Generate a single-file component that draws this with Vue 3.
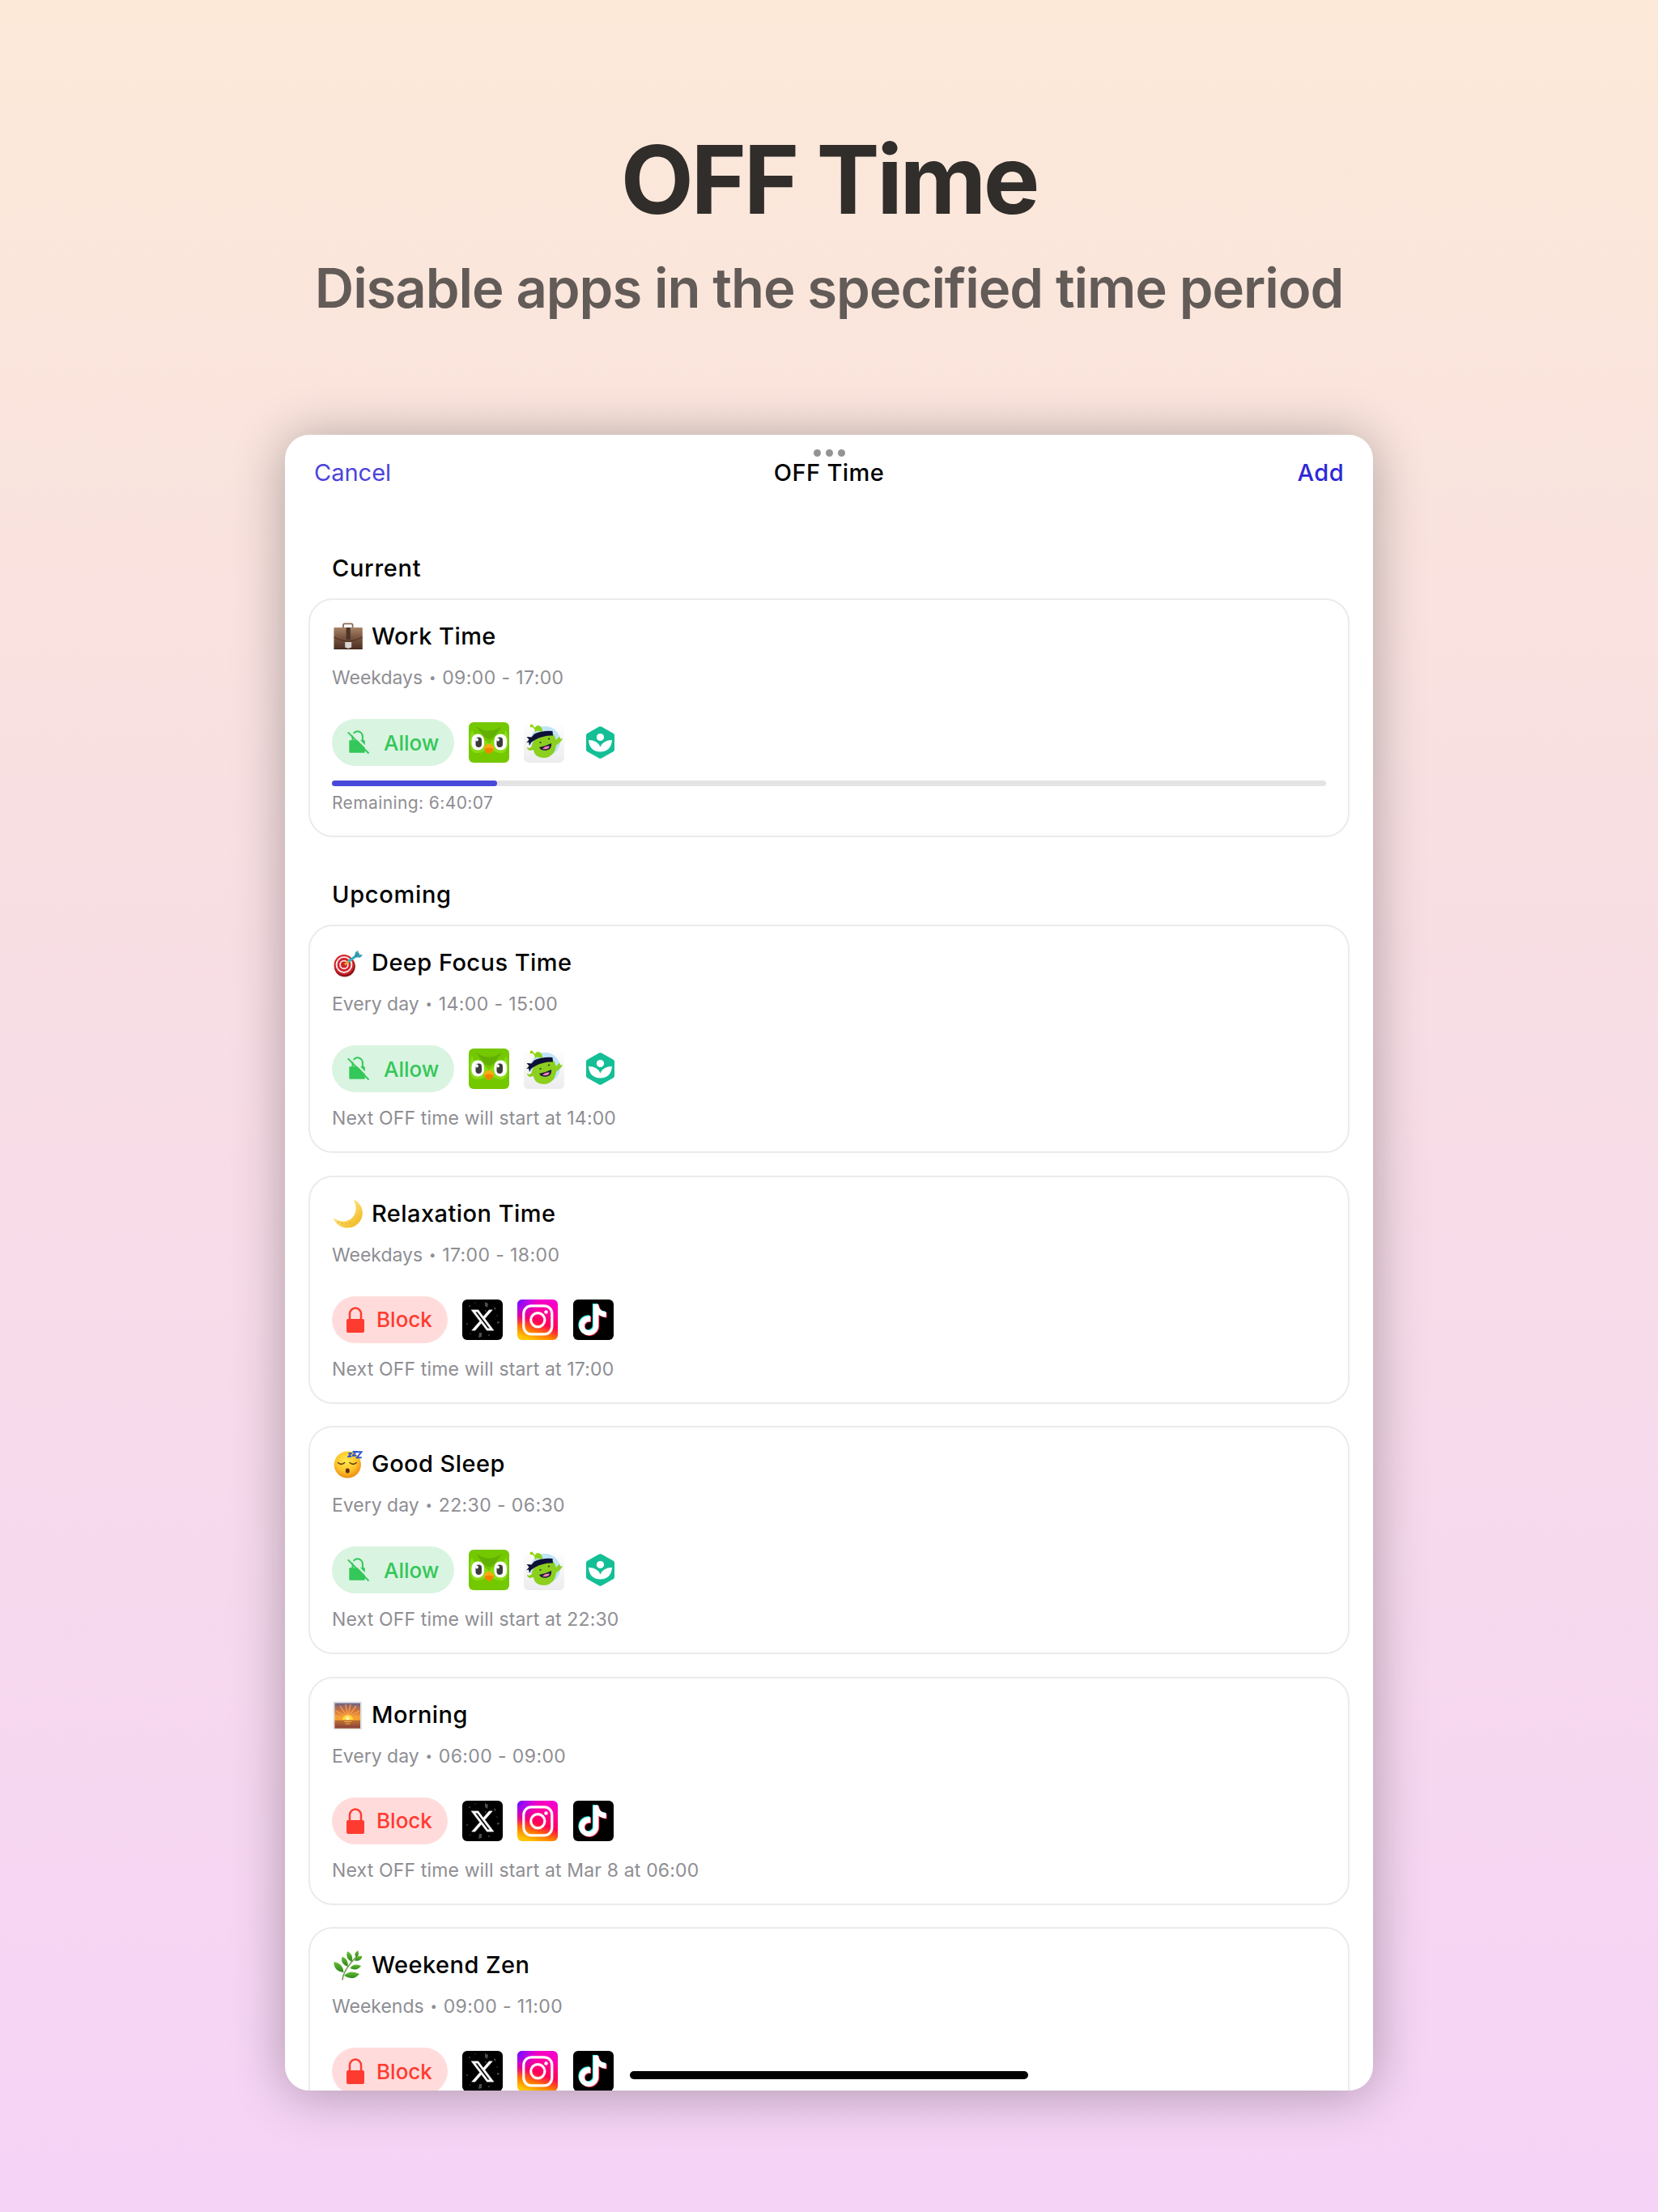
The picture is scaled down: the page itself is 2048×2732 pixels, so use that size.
<script setup>
import { ref } from 'vue'

const allowedApps = ['owl', 'dojo', 'khan']
const blockedApps = ['x', 'instagram', 'tiktok']

const sections = ref([
  {
    name: 'Current',
    items: [
      {
        id: 1,
        emoji: 'briefcase',
        title: 'Work Time',
        days: 'Weekdays',
        hours: '09:00 - 17:00',
        mode: 'allow',
        apps: allowedApps,
        progress: 16.6,
        note: 'Remaining: 6:40:07'
      }
    ]
  },
  {
    name: 'Upcoming',
    items: [
      {
        id: 2,
        emoji: 'target',
        title: 'Deep Focus Time',
        days: 'Every day',
        hours: '14:00 - 15:00',
        mode: 'allow',
        apps: allowedApps,
        note: 'Next OFF time will start at 14:00'
      },
      {
        id: 3,
        emoji: 'moon',
        title: 'Relaxation Time',
        days: 'Weekdays',
        hours: '17:00 - 18:00',
        mode: 'block',
        apps: blockedApps,
        note: 'Next OFF time will start at 17:00'
      },
      {
        id: 4,
        emoji: 'sleep',
        title: 'Good Sleep',
        days: 'Every day',
        hours: '22:30 - 06:30',
        mode: 'allow',
        apps: allowedApps,
        note: 'Next OFF time will start at 22:30'
      },
      {
        id: 5,
        emoji: 'sunrise',
        title: 'Morning',
        days: 'Every day',
        hours: '06:00 - 09:00',
        mode: 'block',
        apps: blockedApps,
        note: 'Next OFF time will start at Mar 8 at 06:00'
      },
      {
        id: 6,
        emoji: 'herb',
        title: 'Weekend Zen',
        days: 'Weekends',
        hours: '09:00 - 11:00',
        mode: 'block',
        apps: blockedApps,
        note: ''
      }
    ]
  }
])
</script>

<template>
  <div class="page">
    <!-- Shared icons -->
    <svg class="sprite" width="0" height="0" aria-hidden="true">
      <defs>
        <linearGradient id="g-case" x1="0" y1="0" x2="0" y2="1">
          <stop offset="0" stop-color="#a98467" />
          <stop offset="0.45" stop-color="#795641" />
          <stop offset="1" stop-color="#4d3023" />
        </linearGradient>
        <linearGradient id="g-moon" x1="0" y1="0" x2="1" y2="1">
          <stop offset="0.3" stop-color="#ffe680" />
          <stop offset="1" stop-color="#eeb010" />
        </linearGradient>
        <radialGradient id="g-face" cx="0.45" cy="0.35" r="0.65">
          <stop offset="0" stop-color="#ffe94f" />
          <stop offset="0.6" stop-color="#fdc52b" />
          <stop offset="1" stop-color="#ee8b14" />
        </radialGradient>
        <linearGradient id="g-sky" x1="0" y1="0" x2="0" y2="1">
          <stop offset="0" stop-color="#6a6288" />
          <stop offset="0.3" stop-color="#d0733f" />
          <stop offset="0.62" stop-color="#fba52c" />
        </linearGradient>
        <linearGradient id="g-sea" x1="0" y1="0" x2="0" y2="1">
          <stop offset="0" stop-color="#c27331" />
          <stop offset="1" stop-color="#863f3d" />
        </linearGradient>
        <linearGradient id="g-leaf" x1="0" y1="0" x2="0" y2="1">
          <stop offset="0" stop-color="#68bd34" />
          <stop offset="1" stop-color="#2c871c" />
        </linearGradient>
        <linearGradient id="g-dojo" x1="0" y1="0" x2="0" y2="1">
          <stop offset="0" stop-color="#ffffff" />
          <stop offset="1" stop-color="#ececee" />
        </linearGradient>
        <linearGradient id="g-insta" x1="0.35" y1="1" x2="0.7" y2="0">
          <stop offset="0" stop-color="#ffc400" />
          <stop offset="0.2" stop-color="#ff7a00" />
          <stop offset="0.45" stop-color="#ff0058" />
          <stop offset="0.8" stop-color="#ff00a8" />
          <stop offset="1" stop-color="#f400d0" />
        </linearGradient>
        <radialGradient id="g-violet" cx="0" cy="0" r="0.62">
          <stop offset="0" stop-color="#5a12ff" />
          <stop offset="0.35" stop-color="#9a08ff" stop-opacity="0.85" />
          <stop offset="1" stop-color="#e000e8" stop-opacity="0" />
        </radialGradient>
      </defs>

      <symbol id="briefcase" viewBox="0 0 38 38">
        <path d="M13 8V5q0-1.600 1.600-1.600h8.400q1.600 0 1.600 1.600V8" fill="none" stroke="#8a6a52" stroke-width="1.800" />
        <path d="M2.400 8h33.400q1 0 1 1v24.500q0 1.500-1.500 1.500H2.900q-1.500 0-1.500-1.500V9q0-1 1-1z" fill="url(#g-case)" />
        <path d="M1.500 20q9 5 17.600 5t17.600-5" fill="none" stroke="#4b2f22" stroke-width="1" />
        <path d="M16.600 8h5.200v15h-5.200z" fill="#4c3528" />
        <path d="M15.200 26h8v6.500l-4 1.500-4-1.500z" fill="#d9d5d2" />
        <path d="M1.500 34.500h35.200" stroke="#3a231a" stroke-width="1.200" />
      </symbol>

      <symbol id="target" viewBox="0 0 38 38">
        <circle cx="14.800" cy="23.500" r="13" fill="#8e1218" />
        <circle cx="14" cy="21.500" r="12.400" fill="#d2232b" />
        <circle cx="14" cy="21.500" r="9.400" fill="none" stroke="#f6e6e6" stroke-width="2" />
        <circle cx="14" cy="21.500" r="4.900" fill="none" stroke="#f6e6e6" stroke-width="1.800" />
        <path d="M15 21.500 20 17" stroke="#e8a52c" stroke-width="3" />
        <path d="M19.500 17.500 29 10.500" stroke="#2bb2c4" stroke-width="3.200" />
        <path d="M26.500 12 28 6l3.200-2 .8 4.400 5.200 1.300-3.500 3z" fill="#3b9fb4" />
        <path d="M27.500 12 33 7" stroke="#1f7287" stroke-width="1" />
      </symbol>

      <symbol id="moon" viewBox="0 0 38 38">
        <path d="M25.500 1.500C34 5 38.500 14 36.300 22.500 33.500 33 23 38.500 13.500 36 7 34.300 2.500 29.500 1 24c7 5.500 16 6 22 1 6.500-5.500 7.500-15 2.500-23.500z" fill="url(#g-moon)" />
        <path d="M6 29q9 5.500 18 0" fill="none" stroke="#d79a12" stroke-width="1" stroke-dasharray="2 3" />
      </symbol>

      <symbol id="sleep" viewBox="0 0 38 38">
        <circle cx="18.300" cy="20" r="16.600" fill="url(#g-face)" />
        <path d="M6.500 17.500q4.200 3.600 8.200 0M21 17.500q4.200 3.600 8.200 0" fill="none" stroke="#5c3a16" stroke-width="1.600" stroke-linecap="round" />
        <ellipse cx="18.300" cy="27.500" rx="2.500" ry="3" fill="#5c2c12" />
        <path d="M19.500 6h3.200l-3.200 4h3.200M24.500 4h4.200l-4 4.800h4.300M29.500 4.200h6l-5.600 7h5.800" fill="none" stroke="#2a56cf" stroke-width="1.900" />
      </symbol>

      <symbol id="sunrise" viewBox="0 0 38 38">
        <rect x="0.500" y="2.500" width="35.500" height="34.500" fill="#dfe3e6" />
        <rect x="2.500" y="4.500" width="31.500" height="31" fill="url(#g-sky)" />
        <path d="M18.500 22 4 14M18.500 22 9 8M18.500 22 16 6M18.500 22 22 6M18.500 22 29 8M18.500 22 33 14M18.500 22 3 20M18.500 22 33.500 20" stroke="#f9a04a" stroke-width="1.300" />
        <path d="M11.500 25.500a7 6.500 0 0 1 14 0z" fill="#ffd93a" />
        <circle cx="18.500" cy="23.500" r="2.500" fill="#fff2a0" />
        <rect x="2.500" y="25.500" width="31.500" height="10" fill="url(#g-sea)" />
        <path d="M14 27.500h9M15.500 30h6" stroke="#f3b64a" stroke-width="1.200" />
      </symbol>

      <symbol id="herb" viewBox="0 0 38 38">
        <path d="M12 37.500C12.500 28 20 18 31 7" fill="none" stroke="#6f9c4c" stroke-width="1.600" />
        <g fill="url(#g-leaf)">
          <path d="M29 9.500Q25 5 31 1 34 6 29 9.500z" />
          <path d="M27 13.500q1-6.500 9.500-5.500-1.500 7-9.500 5.500z" />
          <path d="M23.500 15Q15 10.500 18 2 26.500 6 23.500 15z" />
          <path d="M18.500 21Q9 18 11.500 8.500q8.500 3 7 12.500z" />
          <path d="M21.500 23q4-7 13.500-3-5 7-13.500 3z" />
          <path d="M13.500 28Q1 26.500 1.500 15 13 17 13.500 28z" />
          <path d="M14 32q7.500-8 19-2-8 9.500-19 2z" />
        </g>
      </symbol>

      <symbol id="owl" viewBox="0 0 50 50">
        <rect width="50" height="50" rx="6" fill="#74c800" />
        <path d="M9 5q16 11 32 0L32 17q-7 8-14 0z" fill="#62b003" />
        <path d="M4 9q2 9 13 12 6 2 8 6 2-4 8-6 11-3 13-12 5 13 1 24-2 6-9 5-8-1-13-8-5 7-13 8-7 1-9-5Q-1 22 4 9z" fill="#89dc12" />
        <rect x="3.500" y="14.500" width="15.500" height="20" rx="7.500" fill="#fff" />
        <rect x="31.500" y="14.500" width="15.500" height="20" rx="7.500" fill="#fff" />
        <rect x="8.500" y="18.500" width="7.500" height="12.500" rx="3.700" fill="#3c3c3c" />
        <rect x="34.500" y="18.500" width="7.500" height="12.500" rx="3.700" fill="#3c3c3c" />
        <circle cx="10" cy="21.500" r="1.900" fill="#fff" />
        <circle cx="36" cy="21.500" r="1.900" fill="#fff" />
        <path d="M19 32.500q1-5.500 6-5.500t6 5.500q-2 6-6 6t-6-6z" fill="#f9aa10" />
        <path d="M19.500 33q5.500-2.500 11 0-2 5.500-5.500 5.500t-5.500-5.500z" fill="#f48200" />
      </symbol>

      <symbol id="dojo" viewBox="0 0 50 50">
        <rect width="50" height="50" rx="6" fill="url(#g-dojo)" />
        <circle cx="26.500" cy="23.500" r="18.500" fill="#bfe4f8" />
        <path d="M15 12q-1-6-6-8" fill="none" stroke="#96d600" stroke-width="1.600" />
        <circle cx="9.500" cy="4.500" r="1.900" fill="#96d600" />
        <path d="M14 10q-1-5 3-6 6 0 6 8z" fill="#8cd21c" />
        <path d="M14 20q8-11 20-7 5 3 5.500 9l5-4.500.5 3 3-.5-2 3.500q-4 4-6 5-2 14-14 15.500-13 0-14-10l-4 1q-4-1-4-4l3 1 3-2q0-5 4-9z" fill="#8ccf1e" />
        <path d="M13 14.500q10-4.500 22.500-3.500l.5 5.500Q24 16 13.500 22L9 25l-2 4-1-4.500-3 1 3.500-4L3.500 18l6 .5z" fill="#0d1138" />
        <path d="M19 31q7-1 15-5 1 7-5.500 8.500T19 31z" fill="#1b1a3c" />
        <path d="M23 32.800q4-4 9-3-2 5-9 3z" fill="#ff7fb8" />
        <circle cx="20.500" cy="25" r="1.100" fill="#20401a" />
        <circle cx="31" cy="20.500" r="1.100" fill="#20401a" />
      </symbol>

      <symbol id="khan" viewBox="0 0 50 50">
        <path d="M24 5.600q1.500-.8 3 0l14.500 8.100q1.500.9 1.500 2.500v17.600q0 1.600-1.500 2.500L27 44.400q-1.500.8-3 0L9.500 36.300Q8 35.400 8 33.800V16.200q0-1.600 1.500-2.500z" fill="#14bf96" />
        <circle cx="25.500" cy="18.500" r="4.600" fill="#fff" />
        <path d="M11 22q11 0 14.500 8.500Q29 22 40 22q-1 14-14.500 14.500Q12 36 11 22z" fill="#fff" />
      </symbol>

      <symbol id="x" viewBox="0 0 50 50">
        <rect width="50" height="50" rx="6" fill="#000" />
        <g fill="#4d4d4d">
          <path d="M28 3l4 2-1 5-3-2zM39 9l3 2-2 2zM43 27l4 1-4 2zM21 41h3v5l-4 1z" />
          <circle cx="9" cy="8" r="0.900" /><circle cx="16" cy="4" r="0.700" />
          <circle cx="6" cy="30" r="0.900" /><circle cx="10" cy="42" r="0.700" />
          <circle cx="33" cy="44" r="0.900" /><circle cx="43" cy="20" r="0.700" />
          <circle cx="29" cy="14" r="0.900" /><circle cx="16" cy="35" r="0.700" />
        </g>
        <path transform="translate(11 11.500) scale(1.170)" fill="#fff" stroke="#fff" stroke-width="0.300" d="M18.901 1.153h3.680l-8.040 9.190L24 22.846h-7.406l-5.800-7.584-6.638 7.584H.474l8.600-9.830L0 1.154h7.594l5.243 6.932ZM17.610 20.644h2.039L6.486 3.240H4.298Z" />
      </symbol>

      <symbol id="instagram" viewBox="0 0 50 50">
        <rect width="50" height="50" rx="6" fill="url(#g-insta)" />
        <rect width="50" height="50" rx="6" fill="url(#g-violet)" />
        <rect x="7.800" y="7.800" width="35" height="35" rx="9.500" fill="none" stroke="#fff" stroke-width="3.200" />
        <circle cx="25.300" cy="25.300" r="8.600" fill="none" stroke="#fff" stroke-width="3.200" />
        <circle cx="35.500" cy="15.500" r="2.200" fill="#fff" />
      </symbol>

      <symbol id="tiktok" viewBox="0 0 50 50">
        <rect width="50" height="50" rx="6" fill="#000" />
        <g transform="translate(4.800 5.800) scale(1.600)">
          <path transform="translate(-.6 -.5)" fill="#25f4ee" d="M12.525.02c1.310-.02 2.610-.01 3.910-.02.08 1.530.63 3.090 1.750 4.170 1.120 1.110 2.700 1.620 4.240 1.790v4.030c-1.440-.05-2.890-.35-4.200-.97-.57-.26-1.100-.59-1.620-.93-.01 2.920.01 5.840-.02 8.750-.08 1.400-.54 2.790-1.350 3.940-1.310 1.920-3.580 3.170-5.910 3.210-1.430.08-2.860-.31-4.080-1.030-2.020-1.190-3.440-3.370-3.650-5.710-.02-.5-.03-1-.01-1.490.18-1.900 1.120-3.720 2.580-4.960 1.660-1.440 3.980-2.130 6.150-1.720.02 1.480-.04 2.960-.04 4.440-.99-.32-2.150-.23-3.020.37-.63.41-1.110 1.040-1.360 1.750-.21.51-.15 1.070-.14 1.610.24 1.640 1.820 3.020 3.500 2.870 1.120-.01 2.190-.66 2.770-1.610.19-.33.4-.67.41-1.060.1-1.790.06-3.570.07-5.360.01-4.030-.01-8.050.02-12.070z" />
          <path transform="translate(.6 .5)" fill="#fe2c55" d="M12.525.02c1.310-.02 2.610-.01 3.910-.02.08 1.530.63 3.090 1.750 4.170 1.120 1.110 2.700 1.620 4.240 1.790v4.030c-1.440-.05-2.890-.35-4.200-.97-.57-.26-1.100-.59-1.620-.93-.01 2.920.01 5.840-.02 8.750-.08 1.400-.54 2.790-1.350 3.940-1.310 1.920-3.580 3.170-5.910 3.210-1.430.08-2.860-.31-4.080-1.030-2.020-1.190-3.440-3.370-3.650-5.710-.02-.5-.03-1-.01-1.490.18-1.900 1.120-3.720 2.580-4.960 1.660-1.440 3.980-2.130 6.150-1.720.02 1.480-.04 2.960-.04 4.440-.99-.32-2.150-.23-3.020.37-.63.41-1.110 1.040-1.360 1.750-.21.51-.15 1.070-.14 1.610.24 1.640 1.820 3.020 3.500 2.870 1.120-.01 2.190-.66 2.770-1.610.19-.33.4-.67.41-1.060.1-1.790.06-3.570.07-5.360.01-4.030-.01-8.050.02-12.070z" />
          <path fill="#fff" d="M12.525.02c1.310-.02 2.610-.01 3.910-.02.08 1.530.63 3.090 1.750 4.170 1.120 1.110 2.700 1.620 4.240 1.790v4.030c-1.440-.05-2.890-.35-4.200-.97-.57-.26-1.100-.59-1.620-.93-.01 2.920.01 5.840-.02 8.750-.08 1.400-.54 2.790-1.350 3.940-1.310 1.920-3.580 3.170-5.910 3.210-1.430.08-2.860-.31-4.080-1.030-2.020-1.190-3.440-3.370-3.650-5.710-.02-.5-.03-1-.01-1.490.18-1.900 1.120-3.720 2.580-4.960 1.660-1.440 3.980-2.130 6.150-1.720.02 1.480-.04 2.960-.04 4.440-.99-.32-2.150-.23-3.020.37-.63.41-1.110 1.040-1.360 1.750-.21.51-.15 1.070-.14 1.610.24 1.640 1.820 3.020 3.500 2.870 1.120-.01 2.190-.66 2.770-1.610.19-.33.4-.67.41-1.060.1-1.790.06-3.570.07-5.360.01-4.030-.01-8.050.02-12.070z" />
        </g>
      </symbol>
    </svg>

    <header class="hero">
      <h1>OFF Time</h1>
      <p>Disable apps in the specified time period</p>
    </header>

    <main class="sheet">
      <div class="dots"><i></i><i></i><i></i></div>
      <nav class="bar">
        <span class="cancel">Cancel</span>
        <span class="bar-title">OFF Time</span>
        <span class="add">Add</span>
      </nav>

      <section v-for="section in sections" :key="section.name" class="section">
        <h2>{{ section.name }}</h2>
        <div class="cards">
          <article v-for="item in section.items" :key="item.id" class="card">
            <div class="title">
              <svg class="emoji"><use :href="'#' + item.emoji" /></svg>
              <h3>{{ item.title }}</h3>
            </div>
            <p class="schedule">
              <span>{{ item.days }}</span>
              <span class="bullet">•</span>
              <span class="hours">{{ item.hours }}</span>
            </p>
            <div class="apps">
              <span v-if="item.mode === 'allow'" class="pill allow">
                <svg width="28" height="30" viewBox="0 0 28 30">
                  <path d="M6.500 13V7.500a6 6 0 0 1 12.400 0V13" fill="none" stroke="#34c759" stroke-width="2" />
                  <rect x="2.300" y="12.300" width="19.500" height="15.400" rx="1" fill="#34c759" />
                  <path d="M2.500.5 29 27" stroke="#d9f4e0" stroke-width="2.600" />
                  <path d="M.8 2.300 26.500 28.500" stroke="#34c759" stroke-width="1.900" />
                </svg>
                Allow
              </span>
              <span v-else class="pill block">
                <svg width="22" height="32" viewBox="0 0 22 32">
                  <path d="M4 16V9a7 7.500 0 0 1 14 0V16" fill="none" stroke="#ff3b30" stroke-width="2.500" />
                  <rect y="15" width="22" height="17" rx="2" fill="#ff3b30" />
                </svg>
                Block
              </span>
              <svg v-for="app in item.apps" :key="app" class="app"><use :href="'#' + app" /></svg>
            </div>
            <template v-if="item.progress">
              <div class="track">
                <div class="fill" :style="{ width: item.progress + '%' }"></div>
              </div>
              <p class="remaining">{{ item.note }}</p>
            </template>
            <p v-else-if="item.note" class="note">{{ item.note }}</p>
          </article>
        </div>
      </section>

      <div class="home-indicator"></div>
    </main>
  </div>
</template>

<style>
body {
  margin: 0;
}
</style>

<style scoped>
.page {
  width: 2048px;
  height: 2732px;
  overflow: hidden;
  display: flex;
  flex-direction: column;
  align-items: center;
  font-family: Inter, "Liberation Sans", sans-serif;
  background: linear-gradient(180deg, #fce9d8 0%, #f8dfe3 40%, #f5d3f7 100%);
}

.sprite {
  position: absolute;
}

h1,
h2,
h3,
p {
  margin: 0;
  white-space: nowrap;
}

.hero {
  height: 537px;
  box-sizing: border-box;
  padding-top: 152px;
  text-align: center;
  flex: none;
}

h1 {
  font-size: 117px;
  line-height: 140px;
  font-weight: 700;
  letter-spacing: -3.4px;
  color: #302d2a;
}

.hero p {
  margin-top: 23px;
  font-size: 67px;
  line-height: 82px;
  font-weight: 600;
  letter-spacing: -1.05px;
  color: #625b57;
}

.sheet {
  position: relative;
  box-sizing: border-box;
  width: 1344px;
  height: 2045px;
  flex: none;
  padding: 28px 29px 0;
  overflow: hidden;
  border-radius: 30px;
  background: #fff;
  box-shadow: 0 4px 64px rgba(0, 0, 0, 0.3);
}

.dots {
  position: absolute;
  top: 18px;
  left: 0;
  right: 0;
  display: flex;
  justify-content: center;
  gap: 6px;
}

.dots i {
  width: 9px;
  height: 9px;
  border-radius: 50%;
  background: #939393;
}

.bar {
  display: grid;
  grid-template-columns: 1fr auto 1fr;
  padding: 0 7px;
  font-size: 29px;
  line-height: 37px;
  margin-bottom: -1px;
  font-weight: 500;
  color: #000;
}

.bar-title {
  letter-spacing: 0.4px;
}

.cancel {
  font-weight: 400;
  color: #4a44dc;
}

.add {
  text-align: right;
  font-weight: 500;
  letter-spacing: 0.4px;
  color: #2f28d8;
}

.section {
  padding-top: 53px;
}

.bar + .section {
  padding-top: 83px;
}

h2 {
  padding-left: 29px;
  margin-bottom: 19px;
  font-size: 29px;
  line-height: 36px;
  font-weight: 500;
  letter-spacing: 0.7px;
  color: #000;
}

.cards {
  display: flex;
  flex-direction: column;
  gap: 27.5px;
}

.card {
  border: 2px solid #ebebeb;
  border-radius: 30px;
  padding: 27px;
}

.title {
  display: flex;
  align-items: center;
  gap: 10px;
}

.emoji {
  width: 38px;
  height: 38px;
  margin: -1px 0 -1px 1px;
}

h3 {
  font-size: 29px;
  line-height: 36px;
  font-weight: 500;
  letter-spacing: 0.45px;
  color: #000;
}

.schedule,
.note {
  font-size: 23px;
  line-height: 28px;
  color: #8e8e93;
}

.schedule {
  display: flex;
  margin-top: 19px;
}

.bullet {
  width: 24px;
  font-size: 15px;
  text-align: center;
}

.hours {
  letter-spacing: 0.4px;
}

.note {
  margin-top: 18px;
  letter-spacing: 0.15px;
}

.apps {
  display: flex;
  align-items: center;
  gap: 18.2px;
  margin-top: 37px;
}

.pill {
  box-sizing: border-box;
  display: flex;
  align-items: center;
  height: 58px;
  border-radius: 29px;
  font-size: 26px;
  font-weight: 500;
}

.allow {
  width: 151px;
  padding-left: 19px;
  gap: 17px;
  color: #34c759;
  background: #d9f4e0;
}

.block {
  width: 143px;
  padding-left: 18px;
  gap: 15px;
  color: #ff3b30;
  background: #ffdcdb;
}

.app {
  width: 50px;
  height: 50px;
}

.track {
  height: 7px;
  margin-top: 18px;
  border-radius: 4px;
  background: #e4e4e5;
}

.fill {
  height: 7px;
  border-radius: 4px;
  background: #4a48d8;
}

.remaining {
  margin-top: 8px;
  font-size: 21px;
  line-height: 26px;
  letter-spacing: 0.4px;
  color: #8e8e93;
}

.home-indicator {
  position: absolute;
  left: 50%;
  bottom: 14px;
  width: 492px;
  height: 10px;
  margin-left: -246px;
  border-radius: 5px;
  background: #000;
}
</style>
